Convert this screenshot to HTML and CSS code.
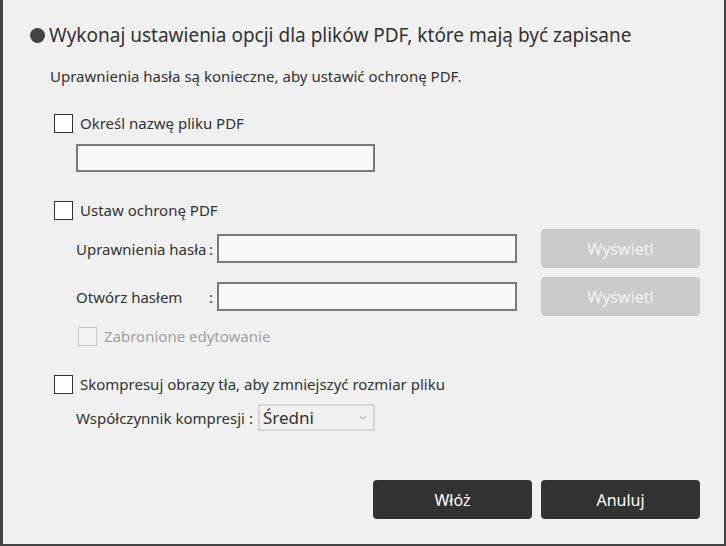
FILE: index.html
```html
<!DOCTYPE html>
<html lang="pl">
<head>
  <meta charset="UTF-8" />
  <title>Ustawienia PDF</title>
  <link rel="stylesheet" href="styles.css">
</head>
<body>
  <div class="dialog">
    <h1 class="title"><span class="dot"></span>Wykonaj ustawienia opcji dla plików PDF, które mają być zapisane</h1>
    <p class="note">Uprawnienia hasła są konieczne, aby ustawić ochronę PDF.</p>

    <!-- Nazwa pliku -->
    <label class="check first"><span class="box"></span>Określ nazwę pliku PDF</label>
    <div class="indent">
      <input class="field name-field" type="text" />
    </div>

    <!-- Ochrona -->
    <label class="check gap-top"><span class="box"></span>Ustaw ochronę PDF</label>
    <div class="row pass-row">
      <span class="row-label"><span>Uprawnienia hasła</span><span>:</span></span>
      <input class="field pass-field" type="password" />
      <button class="btn-show" disabled>Wyświetl</button>
    </div>
    <div class="row pass-row">
      <span class="row-label"><span>Otwórz hasłem</span><span>:</span></span>
      <input class="field pass-field" type="password" />
      <button class="btn-show" disabled>Wyświetl</button>
    </div>
    <label class="check sub disabled"><span class="box"></span>Zabronione edytowanie</label>

    <!-- Kompresja -->
    <label class="check gap-top"><span class="box"></span>Skompresuj obrazy tła, aby zmniejszyć rozmiar pliku</label>
    <div class="row ratio-row">
      <span class="ratio-label">Współczynnik kompresji :</span>
      <div class="select">
        <span>Średni</span>
        <svg width="8" height="5" viewBox="0 0 8 5"><path d="M1 1 L4 4 L7 1" fill="none" stroke="#b0b0b0" stroke-width="1"/></svg>
      </div>
    </div>

    <div class="actions">
      <button class="btn-dark">Włóż</button>
      <button class="btn-dark">Anuluj</button>
    </div>
  </div>
</body>
</html>
```

FILE: styles.css
```css
body {
  margin: 0;
  font-family: "Noto Sans", "Open Sans", sans-serif;
  color: #333;
  background-color: #f0f0f0;
}
.dialog {
  box-sizing: border-box;
  width: 726px;
  height: 546px;
  background-color: #f0f0f0;
  border-left: 3px solid #444;
  border-right: 2px solid #444;
  border-bottom: 2px solid #444;
  padding-top: 21px;
}
.title {
  display: flex;
  align-items: center;
  margin: 0 0 0 27px;
  height: 28px;
  font-size: 19px;
  font-weight: normal;
  color: #333;
}
.dot {
  width: 15px;
  height: 15px;
  border-radius: 50%;
  background-color: #444;
  margin-right: 4px;
}
.note {
  margin: 17px 0 0 47px;
  height: 20px;
  line-height: 20px;
  font-size: 15px;
}
.check {
  display: flex;
  align-items: center;
  height: 20px;
  margin: 27px 0 0 51px;
  font-size: 15px;
}
.check.gap-top {
  margin-top: 28px;
}
.check.sub {
  margin: 10px 0 0 75px;
}
.box {
  box-sizing: border-box;
  width: 19px;
  height: 19px;
  border: 1px solid #333;
  background-color: #fff;
  margin-right: 7px;
}
.check.disabled {
  color: #a0a0a0;
}
.check.disabled .box {
  border-color: #c4c4c4;
  background-color: #f4f4f4;
}
.indent {
  margin: 11px 0 0 73px;
}
.field {
  box-sizing: border-box;
  display: block;
  height: 28px;
  border: 2px solid #7a7a7a;
  background-color: #f9f9f9;
  margin: 0;
  padding: 0 6px;
}
.name-field {
  width: 299px;
}
.row {
  display: flex;
  align-items: center;
  margin-left: 73px;
  font-size: 15px;
}
.pass-row {
  height: 39px;
  margin-top: 9px;
}
.row-label {
  display: flex;
  justify-content: space-between;
  width: 137px;
  padding-right: 4px;
}
.pass-field {
  width: 300px;
  height: 29px;
}
.btn-show {
  width: 159px;
  height: 39px;
  margin-left: 24px;
  border: none;
  border-radius: 4px;
  background-color: #cacaca;
  color: #f2f2f2;
  font-family: inherit;
  font-size: 16px;
}
.ratio-row {
  height: 27px;
  margin-top: 10px;
}
.ratio-label {
  width: 182px;
}
.select {
  box-sizing: border-box;
  display: flex;
  align-items: center;
  justify-content: space-between;
  width: 117px;
  height: 27px;
  border: 2px solid #d6d6d6;
  padding: 0 6px 0 3px;
  font-size: 17px;
}
.actions {
  display: flex;
  gap: 9px;
  margin: 49px 0 0 370px;
}
.btn-dark {
  width: 159px;
  height: 39px;
  border: none;
  border-radius: 4px;
  background-color: #333;
  color: #fff;
  font-family: inherit;
  font-size: 16px;
}
```
